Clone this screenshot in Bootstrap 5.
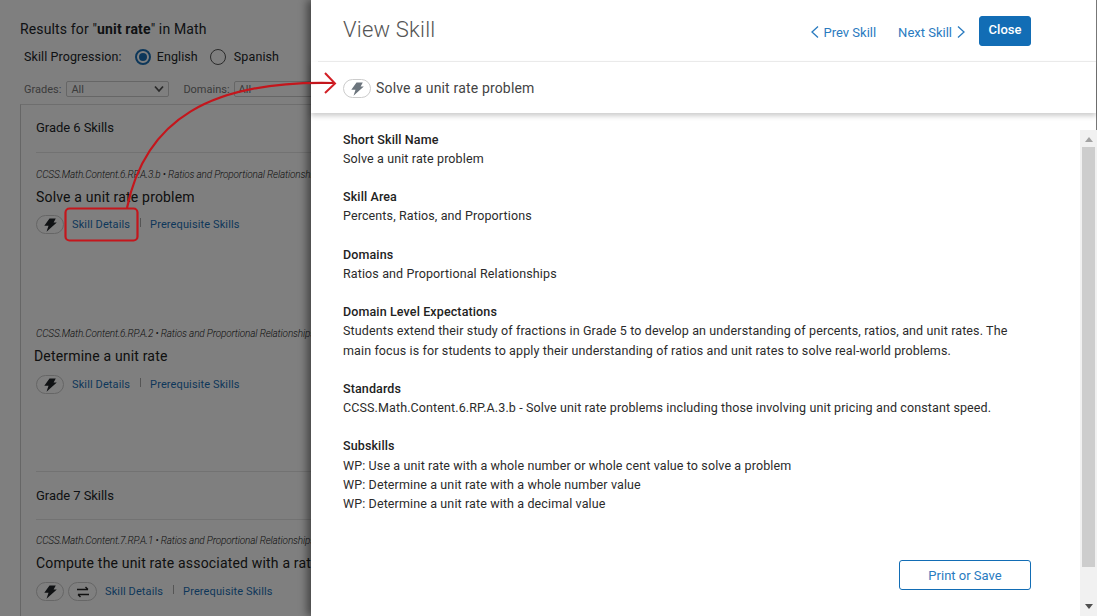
<!DOCTYPE html>
<html lang="en">
<head>
<meta charset="utf-8">
<title>View Skill</title>
<link href="https://cdn.jsdelivr.net/npm/bootstrap@5.3.0/dist/css/bootstrap.min.css" rel="stylesheet">
<style>
html,body{height:616px;overflow:hidden}
body{font-family:Roboto,"Liberation Sans",sans-serif;font-size:13px;line-height:19px;color:#212529;background:#fff;position:relative;width:1097px}
a{text-decoration:none;color:#1a6fb5}
.page-under{width:311px;height:616px;overflow:hidden;padding:19px 0 0 20px;white-space:nowrap}
.res-title{font-size:14px;line-height:20px;margin-bottom:8px;letter-spacing:.14px}
.prog-row{padding-left:4px;font-size:12.500px;line-height:20px;height:20px;margin-bottom:14px;letter-spacing:.1px}
.fake-radio{width:16px;height:16px;border-radius:50%;border:1px solid #555;display:inline-block;position:relative;flex:none}
.fake-radio.on{border:2px solid #1a6fb5}
.fake-radio.on::after{content:"";position:absolute;inset:2px;border-radius:50%;background:#1a6fb5}
.radio-first{margin-left:13px;margin-right:6px}
.radio-gap{margin-left:12px;margin-right:8px}
.filter-row{padding-left:4px;font-size:11px;color:#777;height:16px;margin-bottom:7px}
.fake-select{width:103px;height:16px;border:1px solid #ccc;border-radius:2px;font-size:11px;line-height:15px;padding-left:4px;color:#777;position:relative;flex:none}
.fake-select svg{position:absolute;right:4px;top:3px}
.grades-label{margin-right:5px}
.gap-label{margin-left:14px;margin-right:4px}
.results-box{border:1px solid #ddd;border-left-color:#ccc;width:330px;height:520px;padding:0 15px}
.grade-h{font-size:13px;line-height:19px;padding:13px 0 15px;border-bottom:1px solid #e4e4e4;letter-spacing:-.05px}
.grade-later{padding:14px 0 14px}
.std-line{font-size:10px;font-style:italic;font-weight:300;line-height:14px;color:#222;letter-spacing:-.15px;overflow:hidden}
.skill-name{font-size:14px;line-height:20px;letter-spacing:.18px;color:#222;margin:5px 0 8px}
.name-shift{margin-left:-2px;margin-bottom:9px}
.name-last{margin:5px 0 9px}
.link-row{font-size:11px;line-height:16px;height:19px}
.link-row a{color:#1a6fb5;letter-spacing:.12px}
.pill-ic{width:28px;height:19px;border:1px solid #ccc;border-radius:10px;flex:none;background:#fff}
.pill-wide{width:29px;margin-left:4px}
.sep-bar{width:1px;height:9px;background:#aaa;margin:0 9.500px;position:relative;top:-2px}
.block-one{height:174px;padding-top:15px}
.block-two{height:145px;border-bottom:1px solid #e4e4e4}
.block-last{padding-top:14px}
.shade{position:absolute;inset:0;width:311px;background:rgba(0,0,0,.5)}
.side-panel{position:absolute;left:311px;top:0;width:786px;height:616px;background:#fff;border-right:1px solid #777;box-shadow:-4px 0 8px rgba(0,0,0,.45);display:flex;flex-direction:column}
.panel-top{height:62px;margin-left:7px;padding:0 65px 0 25px;border-bottom:1px solid #eee;flex:none}
.panel-title{font-size:22px;font-weight:300;color:#555;line-height:28px;margin:0 0 2px;letter-spacing:.2px}
.nav-lnk{font-size:13px;color:#2a7bbf;padding-top:3px}
.nav-next{margin-left:22px;margin-right:13px}
.btn-close-blue{background:#126db5;border:1px solid #126db5;color:#fff;font-size:13px;font-weight:500;width:52px;height:30px;padding:0 0 1px;border-radius:3px;line-height:24px}
.panel-sub{height:51px;padding:2px 0 0 32px;flex:none;box-shadow:0 3px 5px rgba(0,0,0,.2);position:relative;z-index:1;font-size:14px;color:#444;letter-spacing:.17px}
.panel-sub .pill-ic{margin-right:5px}
.panel-body-wrap{flex:1;position:relative;min-height:0}
.detail-text{padding:16.800px 70px 0 32px;color:#2b2b2b;font-size:12.500px;line-height:19.150px;letter-spacing:.12px}
.detail-text dt{font-weight:500;color:#222;margin:0}
.detail-text dd{margin:0 0 19.200px}
.btn-print{position:absolute;right:65px;top:447px;width:132px;height:30px;padding:0;border:1px solid #126db5;border-radius:3px;background:#fff;color:#2a7bbf;font-size:13px;line-height:27px}
.fake-scroll{position:absolute;right:-1px;top:17px;bottom:0;width:17px;background:#f1f1f1}
.fake-scroll .thumb{position:absolute;left:2px;right:2px;top:17px;height:420px;background:#cdcdcd}
.arr-up,.arr-dn{position:absolute;left:4.500px;width:0;height:0;border-left:4px solid transparent;border-right:4px solid transparent}
.arr-up{top:7px;border-bottom:5px solid #a3a3a3}
.arr-dn{bottom:7px;border-top:5px solid #505050}
.callout-svg{position:absolute;left:0;top:0;pointer-events:none;z-index:5}
</style>
</head>
<body>
<svg width="0" height="0" class="position-absolute">
<defs>
<symbol id="bolt" viewBox="0 0 14 14"><path d="M6.500.500H12.800L10.600 4.500H13.800L3.500 13.800 5.500 7.800H1.300z" fill="currentColor"/></symbol>
</defs>
</svg>

<div class="page-under">
  <div class="res-title">Results for "<b>unit rate</b>" in Math</div>
  <div class="prog-row d-flex align-items-center">
    <span>Skill Progression:</span>
    <span class="fake-radio on radio-first"></span><span>English</span>
    <span class="fake-radio radio-gap"></span><span>Spanish</span>
  </div>
  <div class="filter-row d-flex align-items-center">
    <span class="grades-label">Grades:</span>
    <span class="fake-select">All<svg width="10" height="8" viewBox="0 0 10 8"><path d="M1 1.500 5 6l4-4.500" fill="none" stroke="#555" stroke-width="1.800"/></svg></span>
    <span class="gap-label">Domains:</span>
    <span class="fake-select">All</span>
  </div>
  <div class="results-box">
    <div class="grade-h">Grade 6 Skills</div>
    <div class="block-one">
      <div class="std-line">CCSS.Math.Content.6.RP.A.3.b • Ratios and Proportional Relationships</div>
      <div class="skill-name">Solve a unit rate problem</div>
      <div class="link-row d-flex align-items-center">
        <span class="pill-ic d-flex align-items-center justify-content-center me-2"><svg width="14" height="14" class="text-dark"><use href="#bolt"/></svg></span>
        <a href="#">Skill Details</a><span class="sep-bar"></span><a href="#">Prerequisite Skills</a>
      </div>
    </div>
    <div class="block-two">
      <div class="std-line">CCSS.Math.Content.6.RP.A.2 • Ratios and Proportional Relationships</div>
      <div class="skill-name name-shift">Determine a unit rate</div>
      <div class="link-row d-flex align-items-center">
        <span class="pill-ic d-flex align-items-center justify-content-center me-2"><svg width="14" height="14" class="text-dark"><use href="#bolt"/></svg></span>
        <a href="#">Skill Details</a><span class="sep-bar"></span><a href="#">Prerequisite Skills</a>
      </div>
    </div>
    <div class="grade-h grade-later">Grade 7 Skills</div>
    <div class="block-last">
      <div class="std-line">CCSS.Math.Content.7.RP.A.1 • Ratios and Proportional Relationships</div>
      <div class="skill-name name-last">Compute the unit rate associated with a ratio of fractions</div>
      <div class="link-row d-flex align-items-center">
        <span class="pill-ic d-flex align-items-center justify-content-center"><svg width="14" height="14" class="text-dark"><use href="#bolt"/></svg></span>
        <span class="pill-ic pill-wide d-flex align-items-center justify-content-center me-2"><svg width="14" height="12" viewBox="0 0 14 12"><path d="M1 3.500h11M9.500 1 12 3.500M13 8.500H2M4.500 11 2 8.500" fill="none" stroke="#222" stroke-width="1.400"/></svg></span>
        <a href="#">Skill Details</a><span class="sep-bar"></span><a href="#">Prerequisite Skills</a>
      </div>
    </div>
  </div>
</div>
<div class="shade"></div>

<aside class="side-panel">
  <div class="panel-top d-flex align-items-center justify-content-between">
    <h1 class="panel-title">View Skill</h1>
    <div class="d-flex align-items-center">
      <a class="nav-lnk d-flex align-items-center" href="#"><svg width="10" height="14" viewBox="0 0 10 14" class="me-1"><path d="M8 1.500 2 7l6 5.500" fill="none" stroke="#2a7bbf" stroke-width="1.300"/></svg>Prev Skill</a>
      <a class="nav-lnk nav-next d-flex align-items-center" href="#">Next Skill<svg width="10" height="14" viewBox="0 0 10 14" class="ms-1"><path d="M2 1.500 8 7l-6 5.500" fill="none" stroke="#2a7bbf" stroke-width="1.300"/></svg></a>
      <button type="button" class="btn btn-close-blue">Close</button>
    </div>
  </div>
  <div class="panel-sub d-flex align-items-center">
    <span class="pill-ic d-flex align-items-center justify-content-center"><svg width="14" height="14" class="text-secondary"><use href="#bolt"/></svg></span>
    <span>Solve a unit rate problem</span>
  </div>
  <div class="panel-body-wrap">
    <dl class="detail-text m-0">
      <dt>Short Skill Name</dt><dd>Solve a unit rate problem</dd>
      <dt>Skill Area</dt><dd>Percents, Ratios, and Proportions</dd>
      <dt>Domains</dt><dd>Ratios and Proportional Relationships</dd>
      <dt>Domain Level Expectations</dt><dd>Students extend their study of fractions in Grade 5 to develop an understanding of percents, ratios, and unit rates. The main focus is for students to apply their understanding of ratios and unit rates to solve real-world problems.</dd>
      <dt>Standards</dt><dd>CCSS.Math.Content.6.RP.A.3.b - Solve unit rate problems including those involving unit pricing and constant speed.</dd>
      <dt>Subskills</dt><dd>WP: Use a unit rate with a whole number or whole cent value to solve a problem<br>WP: Determine a unit rate with a whole number value<br>WP: Determine a unit rate with a decimal value</dd>
    </dl>
    <button type="button" class="btn btn-print">Print or Save</button>
    <div class="fake-scroll"><span class="arr-up"></span><span class="thumb"></span><span class="arr-dn"></span></div>
  </div>
</aside>

<svg class="callout-svg" width="1097" height="616" viewBox="0 0 1097 616">
  <rect x="65.500" y="208.500" width="72" height="32" rx="4" fill="none" stroke="#c4161c" stroke-width="2.200"/>
  <path d="M127 208C145 120 210 80 334 83" fill="none" stroke="#c4161c" stroke-width="2.200"/>
  <path d="M325 73 335 83.500 325 93" fill="none" stroke="#d21f26" stroke-width="2"/>
</svg>
<script src="https://cdn.jsdelivr.net/npm/bootstrap@5.3.0/dist/js/bootstrap.bundle.min.js"></script>
</body>
</html>
